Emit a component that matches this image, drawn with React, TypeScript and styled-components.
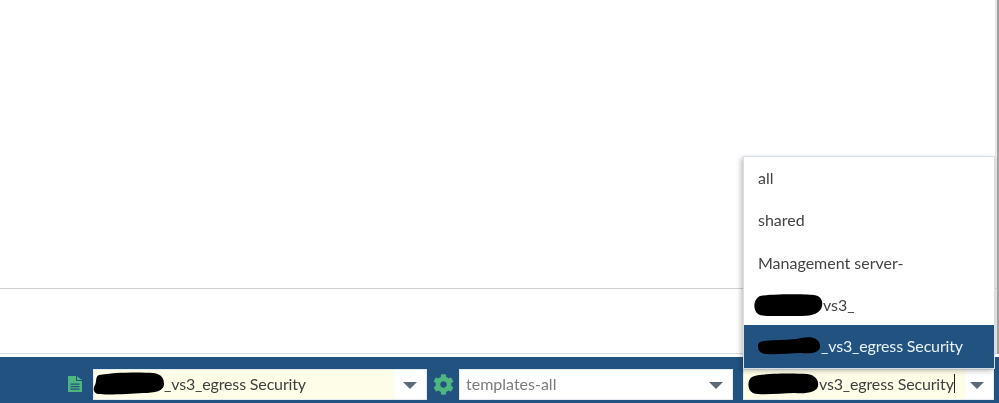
import styled, { createGlobalStyle } from "styled-components";
import { FaCog } from "react-icons/fa";

const GlobalStyle = createGlobalStyle`
  html, body {
    margin: 0;
    padding: 0;
    background: #fff;
  }
  body {
    font-family: Lato, "Open Sans", sans-serif;
  }
`;

const Page = styled.div`
  position: relative;
  width: 999px;
  height: 403px;
  overflow: hidden;
  display: flex;
  flex-direction: column;
  background: #fff;
  filter: blur(0.35px);
`;

const Upper = styled.div`
  border-right: 2px solid #a3a3a3;
  box-shadow: inset -2px 0 0 #e6e6e6;
`;

const Canvas = styled.div`
  height: 288px;
  border-bottom: 1px solid #cfcfcf;
`;

const Strip = styled.div`
  height: 64px;
  border-bottom: 1px solid #d6dadd;
`;

const Footer = styled.div`
  margin-top: 3px;
  flex: 1;
  background: #22527f;
  display: flex;
  align-items: flex-start;
  padding: 12px 5px 0 67px;
  box-sizing: border-box;
`;

const FileSlot = styled.div`
  width: 26px;
  height: 31px;
  display: flex;
  align-items: center;
  padding-bottom: 1px;
  box-sizing: border-box;
  color: #4fb581;
`;

const GearSlot = styled.div`
  width: 32px;
  height: 31px;
  display: flex;
  align-items: center;
  padding-left: 6px;
  box-sizing: border-box;
  color: #4fb581;
  font-size: 21px;
`;

const Combo = styled.div<{ $width: number; $gap?: number; $fill: string; $fillTo: number }>`
  width: ${(p) => p.$width}px;
  height: 31px;
  margin-right: ${(p) => p.$gap ?? 0}px;
  box-sizing: border-box;
  border: 1px solid #e4eaf0;
  background: linear-gradient(
    to right,
    ${(p) => p.$fill} ${(p) => p.$fillTo}px,
    #fff ${(p) => p.$fillTo}px
  );
  display: flex;
  align-items: center;
  padding: 0 0 2px 6px;
  font-size: 16px;
  white-space: nowrap;
`;

const ComboText = styled.span<{ $muted?: boolean }>`
  flex: 1;
  display: flex;
  align-items: center;
  color: ${(p) => (p.$muted ? "#7b7b7b" : "#3f3f3f")};
`;

const Tight = styled.span`
  letter-spacing: -0.15px;
`;

const Caret = styled.span`
  width: 1px;
  height: 19px;
  background: #222;
`;

const Arrow = styled.span`
  width: 0;
  height: 0;
  margin: 3px 9px 0 0;
  border-left: 7px solid transparent;
  border-right: 7px solid transparent;
  border-top: 7px solid #5d6b78;
`;

const Blob = styled.svg<{ $shift: number }>`
  display: block;
  flex: none;
  margin-left: ${(p) => p.$shift}px;
  fill: #000;
`;

const Menu = styled.ul`
  position: absolute;
  left: 743px;
  top: 156px;
  width: 252px;
  height: 213px;
  margin: 0;
  padding: 0;
  list-style: none;
  background: #fff;
  box-sizing: border-box;
  border: 1px solid #d5dde5;
  box-shadow: -2px 2px 5px rgba(0, 0, 0, 0.25);
  display: flex;
  flex-direction: column;
  font-size: 16px;
`;

const MenuItem = styled.li`
  height: 42.5px;
  flex: none;
  display: flex;
  align-items: center;
  padding: 0 0 2px 14px;
  box-sizing: border-box;
  color: #444;
  white-space: nowrap;
`;

const SelectedItem = styled(MenuItem)`
  height: 43px;
  margin-top: -2px;
  padding-left: 13px;
  color: #e8f1f8;
  background: #22527f;
`;

function Redaction({ w, h, d, shift = 0 }: { w: number; h: number; d: string; shift?: number }) {
  return (
    <Blob $shift={shift} width={w} height={h} viewBox={`0 0 ${w} ${h}`}>
      <path d={d} />
    </Blob>
  );
}

function FileIcon() {
  return (
    <svg width="15" height="16" viewBox="0 0 15 16" fill="currentColor">
      <path
        fillRule="evenodd"
        d="M1 0H9V5H15V16H1Z M3.5 7.5V8.7H12.5V7.5Z M3.5 10V11.2H12.5V10Z M3.5 12.5V13.7H12.5V12.5Z"
      />
      <path d="M10 0.2L15 4H10Z" />
    </svg>
  );
}

const blobA =
  "M6 3 C20 0 50 0 60 1 C69 2 71 7 71 12 C71 19 62 21 50 21 C36 22 14 23 5 22 C0 21 0 16 2 13 C4 9 2 5 6 3 Z";
const blobB =
  "M8 2 C20 0 50 0 62 1 C69 2 71 7 70 12 C69 19 60 22 50 22 C34 22 14 23 8 21 C1 19 0 6 8 2 Z";
const blobC =
  "M3 6 C12 3 32 5 44 2 C54 0 62 2 63 9 C64 16 56 18 44 17 C30 17 12 20 5 17 C0 15 0 8 3 6 Z";
const blobD =
  "M5 4 C14 0 46 0 60 1 C69 2 72 8 71 13 C70 19 60 21 48 20 C34 20 14 23 6 20 C0 17 0 7 5 4 Z";

export default function App() {
  return (
    <>
      <GlobalStyle />
      <Page>
        <Upper>
          <Canvas />
          <Strip />
        </Upper>
        <Footer>
          <FileSlot>
            <FileIcon />
          </FileSlot>
          <Combo $width={334} $fill="#fefee8" $fillTo={300}>
            <ComboText>
              <Redaction w={71} h={23} d={blobA} shift={-7} />
              <Tight>_vs3_egress Security</Tight>
            </ComboText>
            <Arrow />
          </Combo>
          <GearSlot>
            <FaCog />
          </GearSlot>
          <Combo $width={274} $gap={10} $fill="#fff" $fillTo={0}>
            <ComboText $muted>templates-all</ComboText>
            <Arrow />
          </Combo>
          <Combo $width={251} $fill="#fefee8" $fillTo={222}>
            <ComboText>
              <Redaction w={72} h={22} d={blobD} shift={-3} />
              <Tight>vs3_egress Security</Tight>
              <Caret />
            </ComboText>
            <Arrow />
          </Combo>
        </Footer>
        <Menu>
          <MenuItem>all</MenuItem>
          <MenuItem>shared</MenuItem>
          <MenuItem>Management server-</MenuItem>
          <MenuItem>
            <Redaction w={71} h={22} d={blobB} shift={-6} />
            vs3_
          </MenuItem>
          <SelectedItem>
            <Redaction w={64} h={19} d={blobC} />
            <Tight>_vs3_egress Security</Tight>
          </SelectedItem>
        </Menu>
      </Page>
    </>
  );
}
